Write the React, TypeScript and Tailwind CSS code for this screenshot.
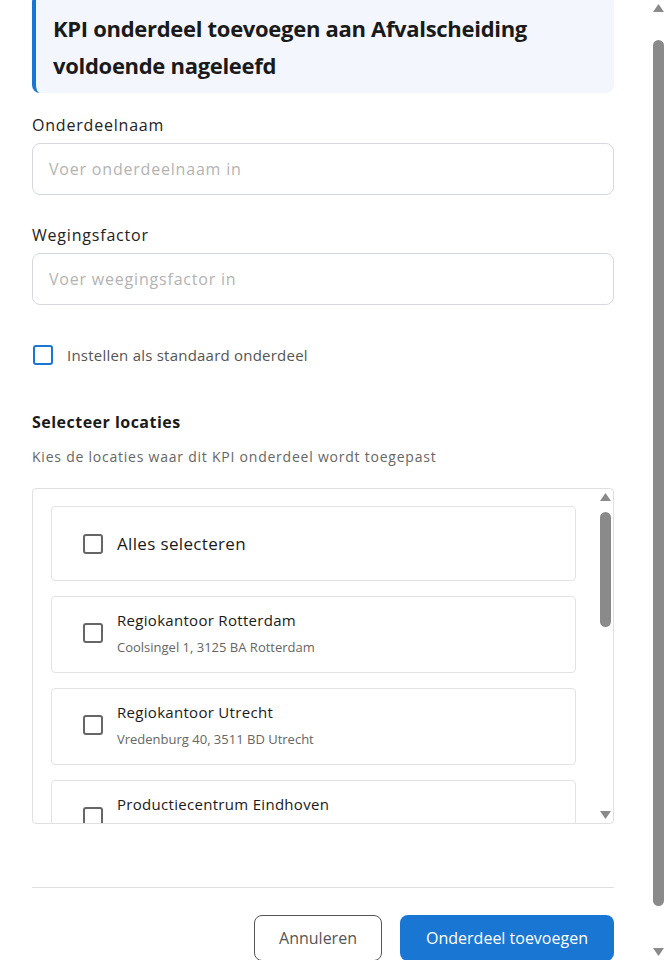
import React, { useEffect, useRef } from "react";

const LOCATIONS = [
  { name: "Regiokantoor Rotterdam", address: "Coolsingel 1, 3125 BA Rotterdam" },
  { name: "Regiokantoor Utrecht", address: "Vredenburg 40, 3511 BD Utrecht" },
  { name: "Productiecentrum Eindhoven", address: "Strijp-S 12, 5617 AB Eindhoven" },
  { name: "Hoofdkantoor Amsterdam", address: "Herengracht 100, 1015 BS Amsterdam" },
];

function Box({ className = "" }: { className?: string }) {
  return <span className={`block w-5 h-5 shrink-0 rounded-[3px] border-2 ${className}`} />;
}

// classic scrollbar drawn over the scroll area
function FakeScrollbar({ thumbTop, thumbHeight, className = "" }: { thumbTop: number; thumbHeight: number; className?: string }) {
  return (
    <div className={`absolute w-[15px] pointer-events-none ${className}`}>
      <svg className="absolute left-[2px] top-[4px]" width="11" height="8" viewBox="0 0 11 8">
        <path d="M5.5 0 L11 8 L0 8 Z" fill="#8a8a8a" />
      </svg>
      <div
        className="absolute left-[2px] w-[11px] rounded-full bg-[#8a8a8a]"
        style={{ top: thumbTop, height: thumbHeight }}
      />
      <svg className="absolute left-[2px] bottom-[4px]" width="11" height="8" viewBox="0 0 11 8">
        <path d="M0 0 L11 0 L5.5 8 Z" fill="#8a8a8a" />
      </svg>
    </div>
  );
}

export default function App() {
  const scrollRef = useRef<HTMLDivElement>(null);

  // page is shown slightly scrolled down, as in the modal
  useEffect(() => {
    if (scrollRef.current) scrollRef.current.scrollTop = 28;
  }, []);

  return (
    <div className="relative h-screen bg-white" style={{ fontFamily: "'Open Sans', Lato, Arial, sans-serif" }}>
      <div ref={scrollRef} className="h-screen overflow-y-scroll [scrollbar-width:none]">
        <div className="pl-[32px] pr-[52px] pt-[22px] pb-[43px]">
          {/* Header */}
          <div className="bg-[#f3f7fd] border-l-4 border-[#1976d2] rounded-lg pl-[17px] pr-4 pt-[16px] pb-[9px]">
            <h2 className="max-w-[490px] text-[22px] leading-[37px] font-bold text-[#1a1a1a] tracking-[-0.3px]">
              KPI onderdeel toevoegen aan Afvalscheiding voldoende nageleefd
            </h2>
          </div>

          {/* Name */}
          <label className="block mt-[20px] text-[16px] leading-6 text-[#222] tracking-[0.05em]">Onderdeelnaam</label>
          <input
            placeholder="Voer onderdeelnaam in"
            className="mt-[6px] w-full h-[52px] px-4 rounded-lg border border-[#d5d8de] text-[16px] tracking-[0.05em] placeholder:text-[#b3b3b3] focus:outline-none"
          />

          {/* Weight */}
          <label className="block mt-[28px] text-[16px] leading-6 text-[#222] tracking-[0.05em]">Wegingsfactor</label>
          <input
            placeholder="Voer weegingsfactor in"
            className="mt-[6px] w-full h-[52px] px-4 rounded-lg border border-[#d5d8de] text-[16px] tracking-[0.05em] placeholder:text-[#b3b3b3] focus:outline-none"
          />

          {/* Default checkbox */}
          <div className="mt-[40px] flex items-center gap-[14px] pl-px">
            <Box className="border-[#1976d2]" />
            <span className="text-[15px] leading-5 text-[#555] tracking-[0.015em]">Instellen als standaard onderdeel</span>
          </div>

          {/* Locations */}
          <h3 className="mt-[45px] text-[16px] leading-6 font-bold text-[#1a1a1a] tracking-[0.03em]">Selecteer locaties</h3>
          <p className="mt-[13px] text-[14px] leading-5 text-[#666] tracking-[0.055em]">
            Kies de locaties waar dit KPI onderdeel wordt toegepast
          </p>

          <div className="relative mt-[21px] h-[336px] border border-[#e0e0e0] rounded">
            <div className="h-full overflow-y-scroll [scrollbar-width:none] pl-[18px] pr-[37px] pt-[17px] pb-4 flex flex-col gap-[15px]">
              <div className="h-[75px] shrink-0 border border-[#e3e3e3] rounded flex items-center gap-[14px] pl-[31px]">
                <Box className="border-[#666]" />
                <span className="text-[17px] text-[#1a1a1a] tracking-[0.02em]">Alles selecteren</span>
              </div>
              {LOCATIONS.map((loc) => (
                <div
                  key={loc.name}
                  className="shrink-0 border border-[#e3e3e3] rounded flex items-center gap-[14px] pl-[31px] pt-[13px] pb-[16px]"
                >
                  <Box className="border-[#666]" />
                  <div className="flex flex-col gap-2">
                    <span className="text-[15px] leading-5 text-[#1a1a1a] tracking-[0.02em]">{loc.name}</span>
                    <span className="text-[13px] leading-[18px] text-[#666]">{loc.address}</span>
                  </div>
                </div>
              ))}
            </div>
            <FakeScrollbar className="right-0 top-0 bottom-0" thumbTop={23} thumbHeight={115} />
          </div>

          {/* Footer */}
          <div className="mt-[63px] border-t border-[#e0e0e0] pt-[27px] flex justify-end gap-[18px]">
            <button className="h-[46px] w-[128px] rounded-lg border border-[#555] text-[16px] text-[#555] bg-white">
              Annuleren
            </button>
            <button className="h-[46px] w-[214px] rounded-lg bg-[#1976d2] text-[16px] font-medium text-white">
              Onderdeel toevoegen
            </button>
          </div>
        </div>
      </div>
      <FakeScrollbar className="right-0 top-0 h-screen" thumbTop={40} thumbHeight={866} />
    </div>
  );
}
